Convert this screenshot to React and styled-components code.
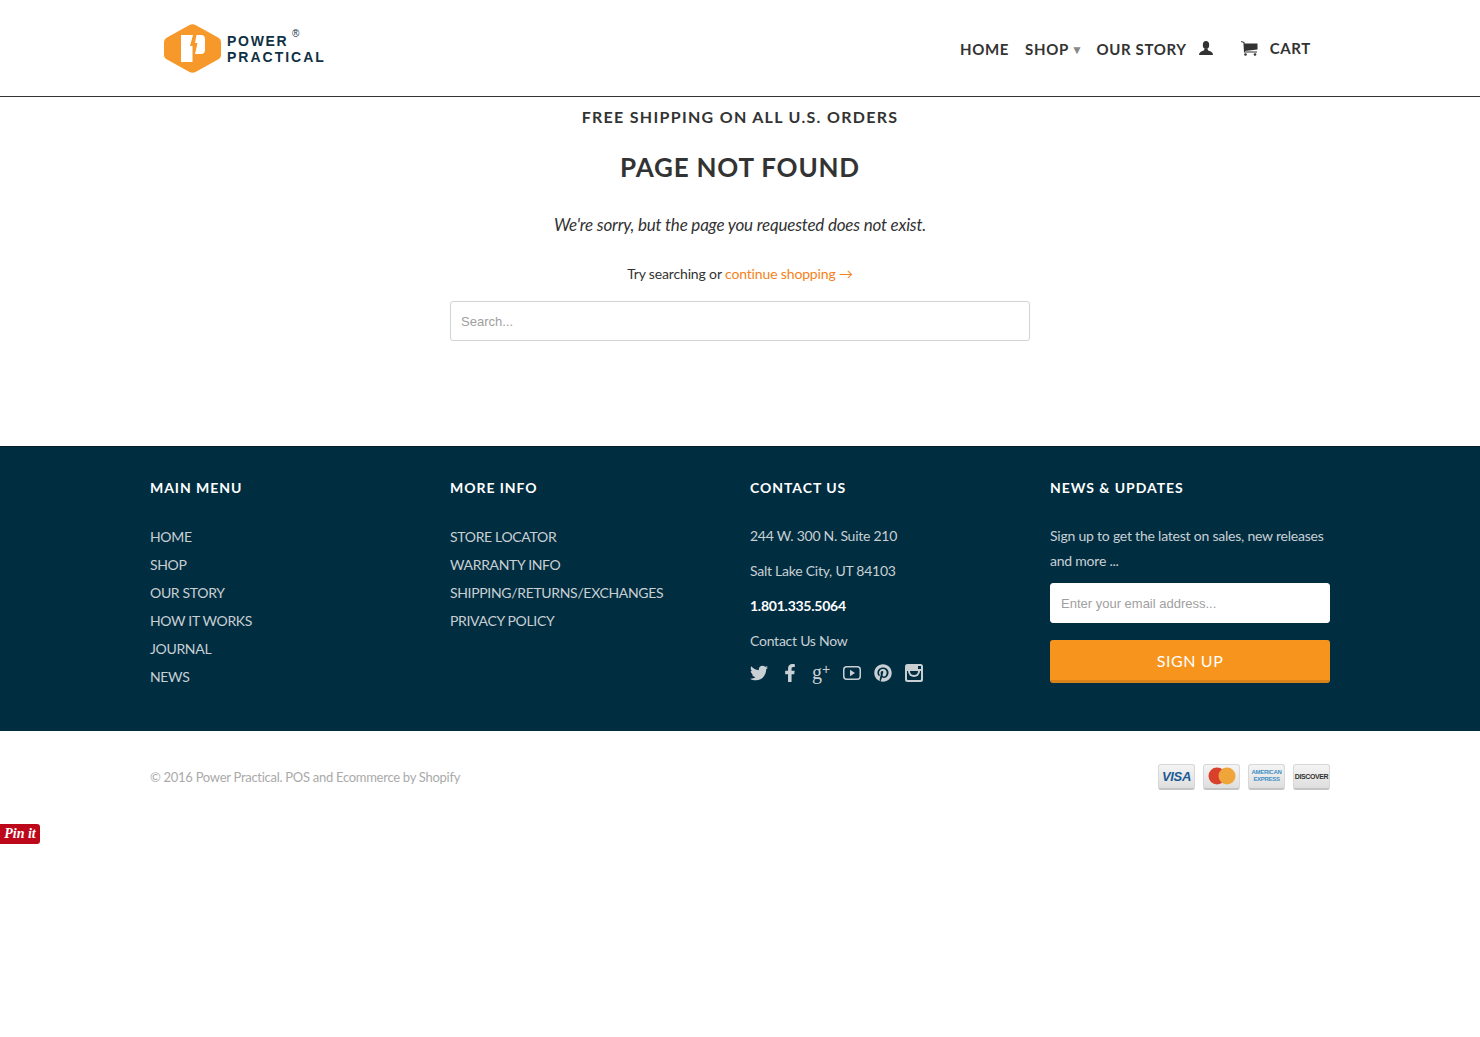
import React from 'react';
import styled, { createGlobalStyle } from 'styled-components';
import { FaTwitter, FaFacebookF, FaPinterest } from 'react-icons/fa';

const GlobalStyle = createGlobalStyle`
  html, body { margin: 0; padding: 0; background: #fff; }
  body { font-family: "Lato", "Open Sans", sans-serif; color: #333; }
  a { color: inherit; text-decoration: none; }
`;

const Wrap = styled.div`
  width: 1180px;
  margin: 0 auto;
`;

const Header = styled.header`
  height: 96px;
  border-bottom: 1px solid #333;
`;

const HeaderInner = styled(Wrap)`
  height: 100%;
  display: flex;
  align-items: center;
  justify-content: space-between;
`;

const Logo = styled.a`
  display: block;
  margin-left: 14px;
  svg { display: block; }
  text {
    font-family: "Liberation Sans", sans-serif;
    font-weight: 700;
    font-size: 14px;
    fill: #0f3144;
  }
`;

const Nav = styled.nav`
  display: flex;
  align-items: center;
  margin: 2px 19px 0 0;
  font-family: "Lato", sans-serif;
  font-weight: 700;
  font-size: 15px;
  letter-spacing: 0.65px;
  color: #333;
`;

const NavLink = styled.a`
  margin-right: ${p => p.$gap}px;
  display: flex;
  align-items: center;
  white-space: nowrap;
  svg { display: block; margin-top: -2px; }
`;

const CartLabel = styled.span`
  margin-left: 12px;
  margin-top: -2px;
`;

const Caret = styled.span`
  margin-left: 2px;
  font-size: 12px;
  color: #888;
`;

const Notice = styled.div`
  font-size: 16px;
  line-height: 20px;
  font-weight: 700;
  letter-spacing: 1.3px;
  text-align: center;
  color: #333;
`;

const Main = styled.main`
  box-sizing: border-box;
  height: 349px;
  padding-top: 10px;
  text-align: center;
`;

const Title = styled.h1`
  margin: 24px 0 0;
  font-size: 26px;
  line-height: 32px;
  font-weight: 700;
  letter-spacing: 0.8px;
  color: #333;
`;

const Sorry = styled.p`
  margin: 30px 0 0;
  font-size: 17px;
  line-height: 24px;
  font-style: italic;
  letter-spacing: -0.2px;
`;

const TryLine = styled.p`
  margin: 26px 0 0;
  font-size: 14px;
  line-height: 22px;
  letter-spacing: -0.15px;
  a { color: #f58220; }
`;

const Field = styled.input`
  display: block;
  box-sizing: border-box;
  width: ${p => p.$width}px;
  height: 40px;
  padding: 0 10px;
  background: #fff;
  border: 1px solid #d3d3d3;
  border-radius: 3px;
  font-family: "Liberation Sans", Arial, sans-serif;
  font-size: 13px;
  outline: none;
  &::placeholder { color: #a0a0a0; opacity: 1; }
`;

const SearchField = styled(Field)`
  margin: 16px auto 0;
`;

const Band = styled.footer`
  height: 284px;
  background: #012d41;
  border-top: 1px solid #0a1c26;
  color: #c8d0d4;
`;

const Columns = styled(Wrap)`
  display: grid;
  grid-template-columns: repeat(4, 280px);
  column-gap: 20px;
  padding-top: 31px;
`;

const ColumnTitle = styled.h4`
  margin: 0 0 25px;
  font-size: 14px;
  line-height: 20px;
  font-weight: 700;
  letter-spacing: 0.95px;
  color: #fff;
`;

const LinkList = styled.ul`
  margin: 0;
  padding: 0;
  list-style: none;
  font-size: 14px;
  line-height: 28px;
  letter-spacing: -0.33px;
`;

const ContactList = styled.div`
  padding-top: 2px;
`;

const ContactLine = styled.p`
  margin: 0 0 13px;
  font-size: 14px;
  line-height: 22px;
  letter-spacing: -0.25px;
  font-weight: ${p => (p.$strong ? 700 : 400)};
  color: ${p => (p.$strong ? '#fff' : 'inherit')};
`;

const Socials = styled.div`
  display: flex;
  align-items: center;
  margin-top: -4px;
  height: 24px;
  color: #c8d0d4;
`;

const Social = styled.a`
  width: 31px;
  display: flex;
  align-items: center;
  svg { display: block; }
`;

const GPlus = styled(Social)`
  font-family: "Liberation Serif", serif;
  font-size: 20px;
  line-height: 20px;
  margin-top: -3px;
  sup {
    font-family: "Liberation Sans", sans-serif;
    font-size: 14px;
    line-height: 10px;
    margin-top: -6px;
  }
`;

const Blurb = styled.p`
  margin: 0;
  font-size: 14px;
  line-height: 25px;
  letter-spacing: -0.22px;
`;

const EmailField = styled(Field)`
  margin-top: 10px;
  border-color: #fff;
`;

const SignUp = styled.button`
  display: block;
  box-sizing: border-box;
  width: 280px;
  height: 43px;
  margin-top: 17px;
  background: #f7941d;
  border: 0;
  border-bottom: 3px solid #d9821a;
  border-radius: 3px;
  color: #fff;
  font-family: "Lato", sans-serif;
  font-size: 16px;
  letter-spacing: 0.6px;
`;

const BottomRow = styled(Wrap)`
  box-sizing: border-box;
  height: 93px;
  padding-bottom: 2px;
  display: flex;
  align-items: center;
  justify-content: space-between;
  font-size: 13px;
  letter-spacing: -0.28px;
  color: #aaa;
`;

const Cards = styled.div`
  display: flex;
  gap: 8px;
`;

const Card = styled.div`
  width: 37px;
  height: 26px;
  box-sizing: border-box;
  border: 1px solid #d8d8d8;
  border-bottom: 2px solid #c4c4c4;
  border-radius: 3px;
  background: linear-gradient(#f4f4f4, #dedede);
  display: flex;
  align-items: center;
  justify-content: center;
  text-align: center;
  overflow: hidden;
  font-family: "Liberation Sans", sans-serif;
  font-weight: 700;
`;

const Visa = styled.span`
  font-size: 13px;
  font-style: italic;
  color: #1c5a94;
`;

const Amex = styled.span`
  font-size: 6px;
  line-height: 7px;
  letter-spacing: -0.3px;
  color: #3f8fc4;
`;

const Discover = styled.span`
  font-size: 7px;
  letter-spacing: -0.4px;
  color: #333;
`;

const PinIt = styled.a`
  display: flex;
  align-items: center;
  justify-content: center;
  width: 40px;
  height: 20px;
  background: #bd081c;
  border-radius: 0 3px 3px 0;
  color: #fff;
  font-family: "Liberation Serif", serif;
  font-weight: 700;
  font-style: italic;
  font-size: 14px;
`;

const LogoMark = () => (
  <svg width="162" height="49" viewBox="0 0 162 49">
    <path
      d="M25.5 1 Q28.5 -0.5 31.5 1 L54 13.5 Q57 15 57 18.5 V30.5 Q57 34 54 35.5 L31.5 48 Q28.5 49.5 25.5 48 L3 35.5 Q0 34 0 30.5 V18.5 Q0 15 3 13.5 Z"
      fill="#f7982b"
    />
    <path
      d="M17 11 H29 L26 22 H28.5 V38 H17 Z M32.5 11 H37 Q41 11 41 15 V26 Q41 30 37 30 H31 L33.5 19 H31 Z"
      fill="#fff"
    />
    <text x="63" y="21.5" letterSpacing="1.7">POWER</text>
    <text x="63" y="37.7" letterSpacing="2">PRACTICAL</text>
    <text x="128" y="13" style={{ fontSize: 10, fontWeight: 400 }}>®</text>
  </svg>
);

const UserIcon = () => (
  <svg width="14" height="14" viewBox="0 0 14 14" fill="currentColor">
    <ellipse cx="7" cy="4" rx="3.2" ry="4" />
    <path d="M0 14 Q0 10.8 4.8 9.6 L5.5 8 H8.5 L9.2 9.6 Q14 10.8 14 14 Z" />
  </svg>
);

const CartIcon = () => (
  <svg width="17" height="15" viewBox="0 0 17 15" fill="currentColor">
    <path d="M0 0 L3.4 1 L3.6 2.5 H16.5 V8.5 L4 10 V10.6 H16 V11.6 H3 L2.4 1.8 L0 1 Z" />
    <circle cx="4.5" cy="13.5" r="1.3" />
    <circle cx="14" cy="13.5" r="1.3" />
  </svg>
);

const YoutubeIcon = () => (
  <svg width="18" height="14" viewBox="0 0 18 14">
    <rect x="0.75" y="0.75" width="16.5" height="12.5" rx="3" fill="none" stroke="currentColor" strokeWidth="1.5" />
    <path d="M7 3.8 L12 7 L7 10.2 Z" fill="currentColor" />
  </svg>
);

const InstagramIcon = () => (
  <svg width="18" height="18" viewBox="0 0 18 18">
    <rect width="18" height="18" rx="2.5" fill="currentColor" />
    <rect x="13" y="2" width="3" height="3" fill="#012d41" />
    <path d="M2 7 H16 V15 Q16 16 15 16 H3 Q2 16 2 15 Z" fill="#012d41" />
    <path d="M3 7 A6 6 0 0 0 15 7 Z" fill="currentColor" />
    <path d="M5 7 A4 4 0 0 0 13 7 Z" fill="#012d41" />
  </svg>
);

const menuLinks = ['HOME', 'SHOP', 'OUR STORY', 'HOW IT WORKS', 'JOURNAL', 'NEWS'];
const infoLinks = ['STORE LOCATOR', 'WARRANTY INFO', 'SHIPPING/RETURNS/EXCHANGES', 'PRIVACY POLICY'];

export default function App() {
  return (
    <>
      <GlobalStyle />
      <Header>
        <HeaderInner>
          <Logo href="#">
            <LogoMark />
          </Logo>
          <Nav>
            <NavLink href="#" $gap={16}>HOME</NavLink>
            <NavLink href="#" $gap={13}>SHOP<Caret>▼</Caret></NavLink>
            <NavLink href="#" $gap={12}>OUR STORY</NavLink>
            <NavLink href="#" $gap={28}><UserIcon /></NavLink>
            <NavLink href="#" $gap={0}>
              <CartIcon />
              <CartLabel>CART</CartLabel>
            </NavLink>
          </Nav>
        </HeaderInner>
      </Header>
      <Main>
        <Notice>FREE SHIPPING ON ALL U.S. ORDERS</Notice>
        <Title>PAGE NOT FOUND</Title>
        <Sorry>We're sorry, but the page you requested does not exist.</Sorry>
        <TryLine>Try searching or <a href="#">continue shopping →</a></TryLine>
        <SearchField $width={580} placeholder="Search..." />
      </Main>
      <Band>
        <Columns>
          <div>
            <ColumnTitle>MAIN MENU</ColumnTitle>
            <LinkList>{menuLinks.map(l => <li key={l}><a href="#">{l}</a></li>)}</LinkList>
          </div>
          <div>
            <ColumnTitle>MORE INFO</ColumnTitle>
            <LinkList>{infoLinks.map(l => <li key={l}><a href="#">{l}</a></li>)}</LinkList>
          </div>
          <div>
            <ColumnTitle>CONTACT US</ColumnTitle>
            <ContactList>
              <ContactLine>244 W. 300 N. Suite 210</ContactLine>
              <ContactLine>Salt Lake City, UT 84103</ContactLine>
              <ContactLine $strong>1.801.335.5064</ContactLine>
              <ContactLine>Contact Us Now</ContactLine>
              <Socials>
                <Social href="#"><FaTwitter size={18} /></Social>
                <Social href="#"><FaFacebookF size={18} /></Social>
                <GPlus href="#">g<sup>+</sup></GPlus>
                <Social href="#"><YoutubeIcon /></Social>
                <Social href="#"><FaPinterest size={18} /></Social>
                <Social href="#"><InstagramIcon /></Social>
              </Socials>
            </ContactList>
          </div>
          <div>
            <ColumnTitle>NEWS &amp; UPDATES</ColumnTitle>
            <Blurb>Sign up to get the latest on sales, new releases and more ...</Blurb>
            <EmailField $width={280} placeholder="Enter your email address..." />
            <SignUp>SIGN UP</SignUp>
          </div>
        </Columns>
      </Band>
      <BottomRow>
        <span>© 2016 Power Practical. POS and Ecommerce by Shopify</span>
        <Cards>
          <Card><Visa>VISA</Visa></Card>
          <Card>
            <svg width="28" height="18" viewBox="0 0 28 18">
              <circle cx="9" cy="9" r="8.5" fill="#d8402b" />
              <circle cx="19" cy="9" r="8.5" fill="#f0a53a" />
            </svg>
          </Card>
          <Card><Amex>AMERICAN<br />EXPRESS</Amex></Card>
          <Card><Discover>DISCOVER</Discover></Card>
        </Cards>
      </BottomRow>
      <PinIt href="#">Pin it</PinIt>
    </>
  );
}
